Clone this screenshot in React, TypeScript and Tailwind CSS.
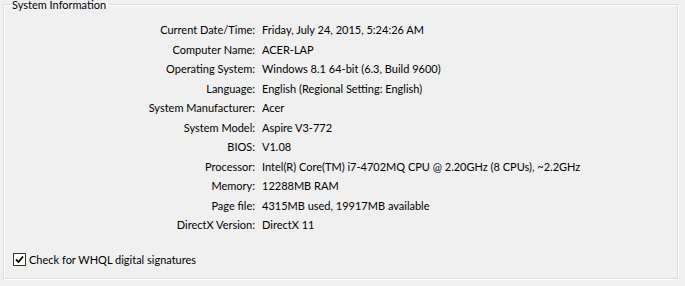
import React from "react";

const rows: [string, string][] = [
  ["Current Date/Time:", "Friday, July 24, 2015, 5:24:26 AM"],
  ["Computer Name:", "ACER-LAP"],
  ["Operating System:", "Windows 8.1 64-bit (6.3, Build 9600)"],
  ["Language:", "English (Regional Setting: English)"],
  ["System Manufacturer:", "Acer"],
  ["System Model:", "Aspire V3-772"],
  ["BIOS:", "V1.08"],
  ["Processor:", "Intel(R) Core(TM) i7-4702MQ CPU @ 2.20GHz (8 CPUs), ~2.2GHz"],
  ["Memory:", "12288MB RAM"],
  ["Page file:", "4315MB used, 19917MB available"],
  ["DirectX Version:", "DirectX 11"],
];

export default function App() {
  return (
    <div className="w-[685px] h-[286px] overflow-hidden bg-[#f0f0f0] text-[11px] text-[#000000] font-[Lato,sans-serif] pl-[3px] pr-[7px]">
      <fieldset className="h-[279px] border border-[#dcdcdc] shadow-[1px_1px_0_#ffffff,inset_1px_1px_0_#ffffff] px-0 flex flex-col">
        <legend className="ml-[6px] px-[2px] leading-[9px]">System Information</legend>
        <div className="mt-[11px] grid grid-cols-[251px_1fr] gap-x-[7px]">
          {rows.map(([k, v]) => (
            <React.Fragment key={k}>
              <div className="text-right h-[19.5px] leading-[19.5px] whitespace-nowrap">{k}</div>
              <div className="h-[19.5px] leading-[19.5px] whitespace-nowrap">{v}</div>
            </React.Fragment>
          ))}
        </div>
        <div className="mt-[18px] ml-[9px] flex items-center gap-[3px]">
          <div className="w-[13px] h-[13px] border border-[#333333] bg-white flex items-center justify-center">
            <svg width="9" height="9" viewBox="0 0 9 9">
              <path d="M1 4.5 L3.5 7 L8 1.5" fill="none" stroke="#000" strokeWidth="1.8" />
            </svg>
          </div>
          <span className="leading-[14px]">Check for WHQL digital signatures</span>
        </div>
      </fieldset>
    </div>
  );
}
